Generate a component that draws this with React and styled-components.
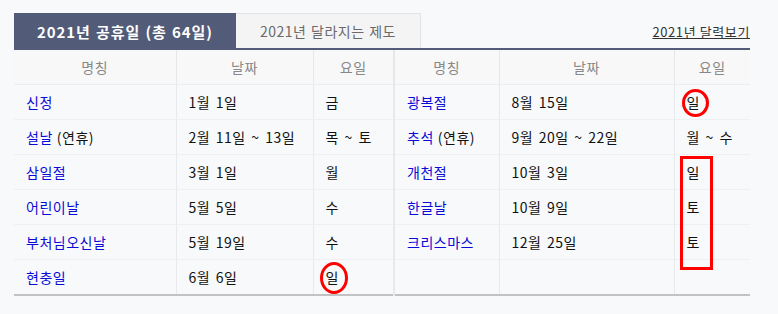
import React from 'react';
import styled, { createGlobalStyle } from 'styled-components';

const GlobalStyle = createGlobalStyle`
  body {
    margin: 0;
    background: #f8f9fb;
    font-family: "Noto Sans CJK KR", "Noto Sans", sans-serif;
  }
`;

const Wrapper = styled.div`
  width: 736px;
  padding: 13px 0 0 14px;
`;

const TabBar = styled.div`
  display: flex;
  align-items: flex-end;
  height: 35px;
  border-bottom: 2px solid #525b78;
`;

const Tab = styled.div`
  display: flex;
  align-items: center;
  justify-content: center;
  box-sizing: border-box;
  height: 35px;
  width: ${(props) => props.width}px;
  font-size: ${(props) => (props.active ? 15 : 14)}px;
  font-weight: ${(props) => (props.active ? 700 : 400)};
  letter-spacing: ${(props) => (props.active ? '0.9px' : '0.5px')};
  word-spacing: 1px;
  color: ${(props) => (props.active ? '#fff' : '#6a6a6a')};
  background: ${(props) => (props.active ? '#525b78' : '#f4f4f4')};
  border: 1px solid ${(props) => (props.active ? '#525b78' : '#e3e3e3')};
  border-bottom: none;
  border-left: ${(props) => (props.active ? '1px solid #525b78' : 'none')};
`;

const CalLink = styled.a`
  margin-left: auto;
  margin-bottom: 7px;
  font-size: 13px;
  color: #333;
  text-decoration: underline;
  letter-spacing: 0.6px;
`;

const TableBox = styled.div`
  position: relative;
`;

const Table = styled.table`
  width: 736px;
  border-collapse: collapse;
  table-layout: fixed;
  border-bottom: 2px solid #c2c2c4;
`;

const HeadCell = styled.th`
  height: 34px;
  padding: 0;
  font-size: 14px;
  font-weight: 400;
  letter-spacing: 0.5px;
  color: #888;
  text-align: center;
  background: #f8f8f9;
  border-bottom: 1px solid #ebedf0;
  border-left: ${(props) => (props.split ? '2px' : '1px')} solid #e6e7e9;
  &:first-child {
    border-left: none;
  }
`;

const Cell = styled.td`
  position: relative;
  height: 34px;
  padding: 0 0 0 12px;
  font-size: 14px;
  letter-spacing: 0.5px;
  word-spacing: 2px;
  color: #111;
  white-space: nowrap;
  border-bottom: 1px solid #eef0f3;
  border-left: ${(props) => (props.split ? '2px' : '1px')} solid #e8e9ec;
  &:first-child {
    border-left: none;
  }
`;

const Name = styled.span`
  color: #0a0ad8;
`;

const Note = styled.span`
  color: #111;
  margin-left: 4px;
`;

const Ring = styled.span`
  position: absolute;
  left: ${(props) => props.left}px;
  top: ${(props) => props.top}px;
  width: ${(props) => props.w}px;
  height: ${(props) => props.h}px;
  box-sizing: border-box;
  border: 3px solid #ff0000;
  border-radius: 50%;
  pointer-events: none;
`;

const Box = styled.div`
  position: absolute;
  left: 666px;
  top: 106px;
  width: 33px;
  height: 114px;
  box-sizing: border-box;
  border: 3px solid #ff0000;
  pointer-events: none;
`;

const widths = [162, 137, 81, 105, 175, 76];

const rows = [
  [['신정'], '1월 1일', '금', ['광복절'], '8월 15일', '일'],
  [['설날', '(연휴)'], '2월 11일 ~ 13일', '목 ~ 토', ['추석', '(연휴)'], '9월 20일 ~ 22일', '월 ~ 수'],
  [['삼일절'], '3월 1일', '월', ['개천절'], '10월 3일', '일'],
  [['어린이날'], '5월 5일', '수', ['한글날'], '10월 9일', '토'],
  [['부처님오신날'], '5월 19일', '수', ['크리스마스'], '12월 25일', '토'],
  [['현충일'], '6월 6일', '일', null, '', ''],
];

const renderName = (name) =>
  name ? (
    <>
      <Name>{name[0]}</Name>
      {name[1] && <Note>{name[1]}</Note>}
    </>
  ) : null;

export default function App() {
  return (
    <Wrapper>
      <GlobalStyle />
      <TabBar>
        <Tab active width={222}>2021년 공휴일 (총 64일)</Tab>
        <Tab width={185}>2021년 달라지는 제도</Tab>
        <CalLink href="#">2021년 달력보기</CalLink>
      </TabBar>
      <TableBox>
        <Table>
          <colgroup>
            {widths.map((w, i) => (
              <col key={i} style={{ width: w }} />
            ))}
          </colgroup>
          <thead>
            <tr>
              <HeadCell>명칭</HeadCell>
              <HeadCell>날짜</HeadCell>
              <HeadCell>요일</HeadCell>
              <HeadCell split>명칭</HeadCell>
              <HeadCell>날짜</HeadCell>
              <HeadCell>요일</HeadCell>
            </tr>
          </thead>
          <tbody>
            {rows.map((r, i) => (
              <tr key={i}>
                <Cell>{renderName(r[0])}</Cell>
                <Cell>{r[1]}</Cell>
                <Cell>
                  {r[2]}
                  {i === 5 && <Ring left={6} top={2} w={28} h={32} />}
                </Cell>
                <Cell split>{renderName(r[3])}</Cell>
                <Cell>{r[4]}</Cell>
                <Cell>
                  {r[5]}
                  {i === 0 && <Ring left={7} top={4} w={27} h={28} />}
                </Cell>
              </tr>
            ))}
          </tbody>
        </Table>
        <Box />
      </TableBox>
    </Wrapper>
  );
}
